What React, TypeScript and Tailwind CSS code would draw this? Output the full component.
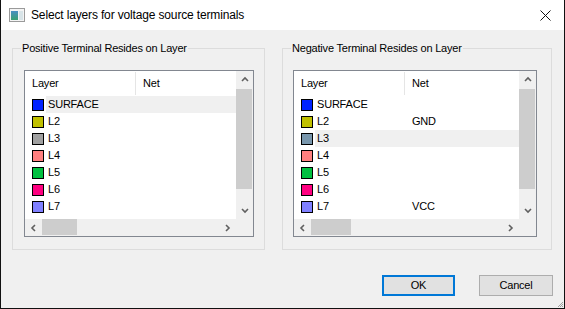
import React from "react";

type Row = { name: string; color: string; net?: string };

const leftRows: Row[] = [
  { name: "SURFACE", color: "#0022ff" },
  { name: "L2", color: "#c0c000" },
  { name: "L3", color: "#a0a0a0" },
  { name: "L4", color: "#ff8080" },
  { name: "L5", color: "#00c040" },
  { name: "L6", color: "#ff0080" },
  { name: "L7", color: "#8080ff" },
];

const rightRows: Row[] = [
  { name: "SURFACE", color: "#0022ff" },
  { name: "L2", color: "#c0c000", net: "GND" },
  { name: "L3", color: "#7896ac" },
  { name: "L4", color: "#ff8080" },
  { name: "L5", color: "#00c040" },
  { name: "L6", color: "#ff0080" },
  { name: "L7", color: "#8080ff", net: "VCC" },
];

function Chevron({ dir }: { dir: "up" | "down" | "left" | "right" }) {
  const paths: Record<string, string> = {
    up: "M1 5 L4 2 L7 5",
    down: "M1 2 L4 5 L7 2",
    left: "M5 1 L2 4 L5 7",
    right: "M2 1 L5 4 L2 7",
  };
  const vertical = dir === "up" || dir === "down";
  return (
    <svg
      width={vertical ? 8 : 7}
      height={vertical ? 7 : 8}
      viewBox={vertical ? "0 0 8 7" : "0 0 7 8"}
    >
      <path d={paths[dir]} fill="none" stroke="#606060" strokeWidth="1.6" />
    </svg>
  );
}

function ListBox({
  width,
  rows,
  selected,
  thumbW,
  ml,
}: {
  width: string;
  rows: Row[];
  selected: number;
  thumbW: string;
  ml: string;
}) {
  return (
    <div
      className={`${width} ${ml} mt-[15px] h-[167px] border border-[#828790] bg-white flex flex-col`}
    >
      <div className="flex h-[148px]">
        <div className="flex-1 flex flex-col">
          <div className="h-[25px] flex items-center">
            <div className="w-[110px] pl-[7px]">Layer</div>
            <div className="w-px h-[23px] bg-[#e5e5e5]" />
            <div className="pl-[7px]">Net</div>
          </div>
          {rows.map((r, i) => (
            <div key={r.name} className="h-[17px] flex">
              <div className="w-[21px] pl-[7px] pt-[3px] shrink-0">
                <div
                  className="w-[12px] h-[12px] border border-black"
                  style={{ background: r.color }}
                />
              </div>
              <div
                className={`flex-1 flex items-center ${
                  i === selected ? "bg-[#f0f0f0]" : ""
                }`}
              >
                <div className="w-[89px] pl-[2px]">{r.name}</div>
                <div className="pl-[8px]">{r.net ?? ""}</div>
              </div>
            </div>
          ))}
        </div>
        <div className="w-[17px] bg-[#f0f0f0] flex flex-col">
          <div className="h-[17px] flex items-center justify-center">
            <Chevron dir="up" />
          </div>
          <div className="mt-px h-[100px] mr-px bg-[#cdcdcd]" />
          <div className="flex-1" />
          <div className="h-[17px] flex items-center justify-center">
            <Chevron dir="down" />
          </div>
        </div>
      </div>
      <div className="h-[17px] flex bg-[#f0f0f0]">
        <div className="flex-1 flex">
          <div className="w-[17px] flex items-center justify-center">
            <Chevron dir="left" />
          </div>
          <div className={`${thumbW} mb-px bg-[#cdcdcd]`} />
          <div className="flex-1" />
          <div className="w-[17px] flex items-center justify-center">
            <Chevron dir="right" />
          </div>
        </div>
        <div className="w-[17px]" />
      </div>
    </div>
  );
}

export default function App() {
  return (
    <div
      className="relative w-[565px] h-[309px] border-l border-r border-b border-[#111] bg-[#f0f0f0] text-[11px] leading-[13px] tracking-[-0.2px] text-black flex flex-col"
      style={{ fontFamily: '"Liberation Sans", Arial, sans-serif' }}
    >
      <div className="h-[30px] bg-white flex items-center shrink-0">
        <div className="pl-[8px] pr-[6px] flex items-center">
          <svg width="16" height="14" viewBox="0 0 16 14">
            <rect x="0.5" y="0.5" width="15" height="13" fill="#f4f4f4" stroke="#9a9a9a" />
            <defs>
              <linearGradient id="g" x1="0" y1="0" x2="0" y2="1">
                <stop offset="0" stopColor="#4a8fc4" />
                <stop offset="1" stopColor="#3aa070" />
              </linearGradient>
            </defs>
            <rect x="2" y="3" width="7" height="9" fill="url(#g)" />
            <rect x="10" y="3" width="4" height="9" fill="#d8e4e8" />
          </svg>
        </div>
        <div
          className="text-[12px] tracking-[-0.15px] flex-1"
          style={{ fontFamily: '"Segoe UI", "Liberation Sans", Arial, sans-serif' }}
        >
          Select layers for voltage source terminals
        </div>
        <div className="w-[30px] flex items-center justify-center pr-[8px]">
          <svg width="11" height="11" viewBox="0 0 11 11">
            <path d="M0.5 0.5 L10.5 10.5 M10.5 0.5 L0.5 10.5" stroke="#111" strokeWidth="1" />
          </svg>
        </div>
      </div>

      <div className="flex-1 flex flex-col pt-[12px]">
        <div className="flex pl-[11px]">
          <fieldset className="w-[253px] h-[208px] border border-[#dcdcdc] pl-[8px]">
            <legend className="px-[1px]">Positive Terminal Resides on Layer</legend>
            <ListBox width="w-[230px]" ml="ml-[3px]" rows={leftRows} selected={0} thumbW="w-[35px]" />
          </fieldset>
          <fieldset className="ml-[17px] w-[270px] h-[208px] border border-[#dcdcdc] pl-[8px]">
            <legend className="px-[1px]">Negative Terminal Resides on Layer</legend>
            <ListBox width="w-[244px]" ml="ml-[2px]" rows={rightRows} selected={2} thumbW="w-[40px]" />
          </fieldset>
        </div>
        <div className="flex justify-end pr-[11px] mt-[25px] gap-[24px]">
          <button className="w-[73px] h-[21px] border-2 border-[#0078d7] bg-[#e1e1e1] flex items-center justify-center">
            OK
          </button>
          <button className="w-[74px] h-[21px] border border-[#adadad] bg-[#e1e1e1] flex items-center justify-center">
            Cancel
          </button>
        </div>
      </div>

      <svg className="absolute right-0 bottom-0" width="8" height="8" viewBox="0 0 8 8">
        <path d="M7 2 L2 7 M7 4 L4 7 M7 6 L6 7" stroke="#a0a0a0" strokeWidth="1" />
      </svg>
    </div>
  );
}
